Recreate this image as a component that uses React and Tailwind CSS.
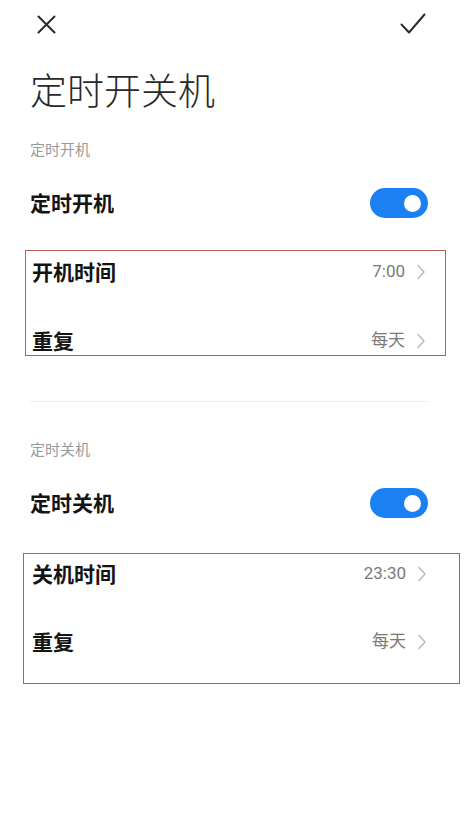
import React from "react";

const font = { fontFamily: '"Noto Sans CJK SC", "Noto Sans", sans-serif' };

function Chevron() {
  return (
    <svg width="10" height="16" viewBox="0 0 10 16" fill="none" className="ml-[11px]">
      <path d="M2 1.5 L8 8 L2 14.5" stroke="#b8b8b8" strokeWidth="1.4" strokeLinecap="round" strokeLinejoin="round" />
    </svg>
  );
}

function Toggle() {
  return (
    <div className="flex h-[30px] w-[58px] items-center justify-end rounded-full bg-[#1b80f2] pr-[7px]">
      <div className="h-[17px] w-[17px] rounded-full bg-white" />
    </div>
  );
}

function Row({ label, value, className }) {
  return (
    <div className={"flex items-center justify-between " + className}>
      <span className="text-[21px] font-bold text-[#141414]">{label}</span>
      <span className="flex items-center font-['Roboto','Noto_Sans_CJK_SC',sans-serif] text-[17px] text-[#7a7a7a]">
        {value}
        <Chevron />
      </span>
    </div>
  );
}

export default function App() {
  return (
    <div className="min-h-[819px] w-[474px] bg-white" style={font}>
      <div className="flex h-[48px] items-center justify-between pl-[37px] pr-[48px]">
        <svg width="19" height="19" viewBox="0 0 19 19" fill="none">
          <path d="M1.5 1.5 L17.5 17.5 M17.5 1.5 L1.5 17.5" stroke="#2a2a2a" strokeWidth="2" strokeLinecap="round" />
        </svg>
        <svg width="26" height="22" viewBox="0 0 26 22" fill="none">
          <path d="M1.5 11.5 L9 19.5 L24.5 1.5" stroke="#2a2a2a" strokeWidth="2" strokeLinecap="round" strokeLinejoin="round" />
        </svg>
      </div>

      <div className="flex flex-col pl-[30px] pr-[46px]">
        <h1 className="mt-[16px] h-[50px] text-[37px] leading-[50px] font-light text-[#2a2a2a]">定时开关机</h1>

        <div className="mt-[25px] h-[20px] text-[15px] leading-[20px] text-[#9a9a9a]">定时开机</div>
        <div className="mt-[14px] flex h-[60px] items-center justify-between">
          <span className="text-[21px] font-bold text-[#141414]">定时开机</span>
          <Toggle />
        </div>

        <div className="ml-[-5px] mt-[17px] flex w-[421px] flex-col border border-[#b65f58] pl-[6px] pr-[19px]">
          <Row label="开机时间" value="7:00" className="h-[42px]" />
          <Row label="重复" value="每天" className="mt-[34px] h-[28px]" />
        </div>

        <div className="mt-[45px] h-px bg-[#efefef]" />

        <div className="mt-[37px] h-[20px] text-[15px] leading-[20px] text-[#9a9a9a]">定时关机</div>
        <div className="mt-[14px] flex h-[60px] items-center justify-between">
          <span className="text-[21px] font-bold text-[#141414]">定时关机</span>
          <Toggle />
        </div>

        <div className="ml-[-7px] mt-[20px] flex w-[437px] flex-col border border-[#b65f58] pb-[21px] pl-[8px] pr-[32px]">
          <Row label="关机时间" value="23:30" className="h-[40px]" />
          <Row label="重复" value="每天" className="mt-[28px] h-[40px]" />
        </div>
      </div>
    </div>
  );
}
